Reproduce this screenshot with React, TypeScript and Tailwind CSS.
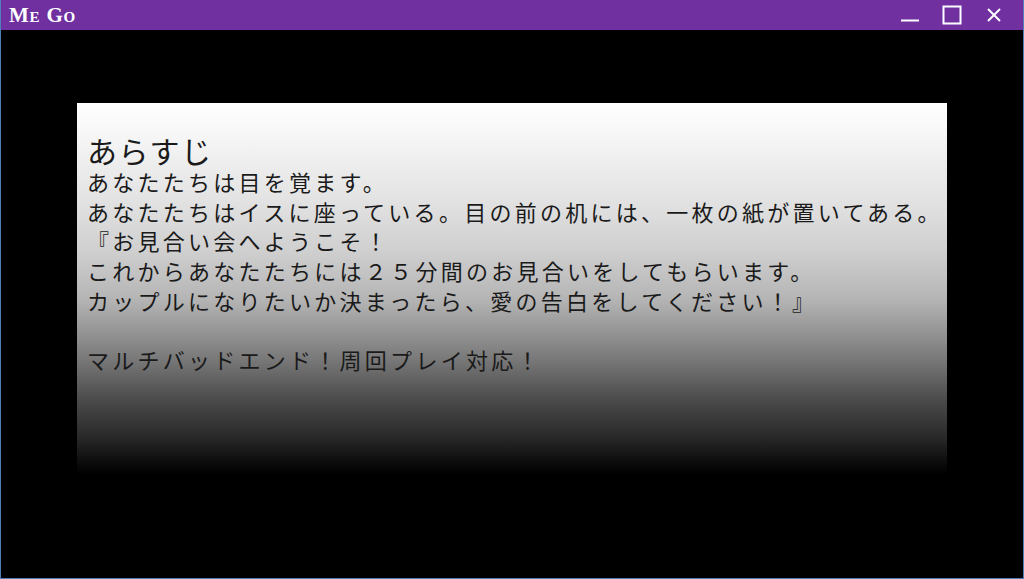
import React from "react";

export default function App() {
  const lines = [
    "あなたたちは目を覚ます。",
    "あなたたちはイスに座っている。目の前の机には、一枚の紙が置いてある。",
    "『お見合い会へようこそ！",
    "これからあなたたちには２５分間のお見合いをしてもらいます。",
    "カップルになりたいか決まったら、愛の告白をしてください！』",
    "\u00a0",
    "マルチバッドエンド！周回プレイ対応！",
  ];
  return (
    <div className="w-[1024px] h-[579px] bg-black flex flex-col border border-t-0 border-[#4f7fb8] overflow-hidden">
      <div className="h-[30px] bg-[#7030a0] flex items-center justify-between shrink-0 -mx-px">
        <div
          className="pl-[9px] text-white text-[21px] font-bold leading-none tracking-[0.8px]"
          style={{ fontFamily: '"Liberation Serif", "DejaVu Serif", serif', fontVariant: "small-caps" }}
        >
          Me Go
        </div>
        <div className="flex items-center h-full pr-[7px]">
          <div className="w-[46px] h-full flex items-center justify-center">
            <svg width="20" height="20" viewBox="0 0 20 20">
              <line x1="1" y1="15.5" x2="19" y2="15.5" stroke="white" strokeWidth="2" />
            </svg>
          </div>
          <div className="w-[38px] h-full flex items-center justify-center">
            <svg width="20" height="20" viewBox="0 0 20 20">
              <rect x="1.5" y="1.5" width="17" height="17" fill="none" stroke="white" strokeWidth="2" />
            </svg>
          </div>
          <div className="w-[46px] h-full flex items-center justify-center">
            <svg width="16" height="16" viewBox="0 0 16 16">
              <path d="M2 2 L14 14 M14 2 L2 14" stroke="white" strokeWidth="2" />
            </svg>
          </div>
        </div>
      </div>
      <div className="flex-1 px-[76px] pt-[73px]">
        <div
          className="h-[372px] w-[870px] pl-[10px] pt-[30px] bg-[linear-gradient(to_bottom,#ffffff_0%,#fafafa_5%,#e4e4e4_25%,#cfcfcf_40%,#b4b4b4_53%,#787878_69%,#4a4a4a_80%,#282828_90%,#0a0a0a_97%,#000000_100%)] text-[#1a1a1a] whitespace-nowrap"
          style={{ fontFamily: '"Noto Sans CJK JP", sans-serif' }}
        >
          <div className="text-[30px] leading-[34px] font-normal tracking-[1.5px]">あらすじ</div>
          {lines.map((l, i) => (
            <div key={i} className="text-[22px] leading-[29.7px] font-normal tracking-[3.26px]">
              {l}
            </div>
          ))}
        </div>
      </div>
    </div>
  );
}
